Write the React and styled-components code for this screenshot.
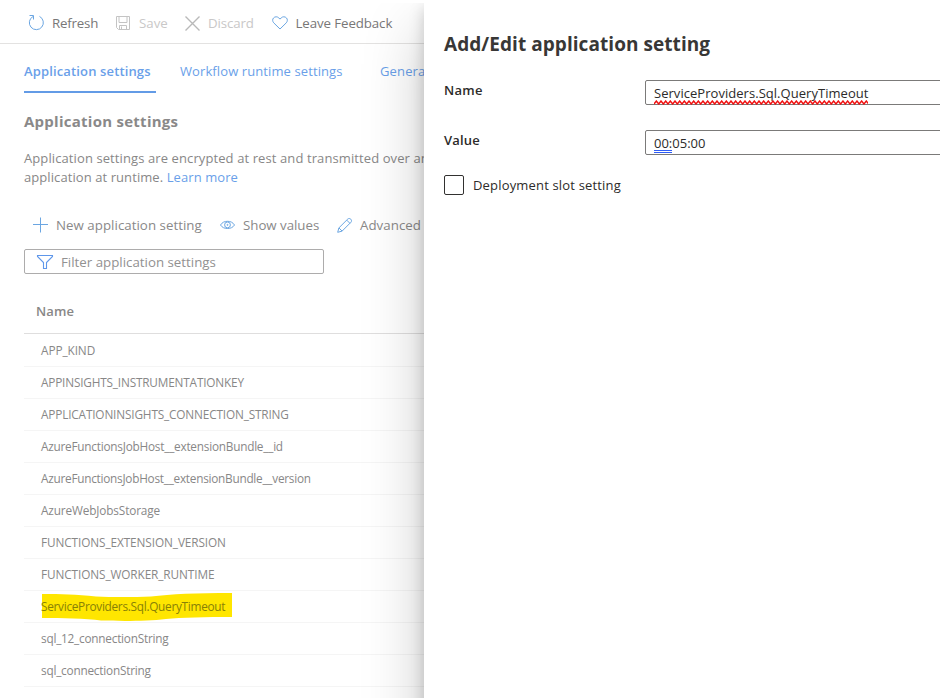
import React from "react";
import styled, { createGlobalStyle } from "styled-components";

const GlobalStyle = createGlobalStyle`
  *, *::before, *::after { box-sizing: border-box; }
  body {
    margin: 0;
    background: #fff;
    font-family: "Open Sans", "Noto Sans", sans-serif;
    overflow: hidden;
  }
`;

const Page = styled.div`
  width: 940px;
  height: 698px;
  padding-top: 3px;
  overflow: hidden;
`;

const Stage = styled.div`
  display: flex;
  height: 695px;
  overflow: hidden;
`;

const Blade = styled.main`
  flex: none;
  width: 424px;
  overflow: hidden;
  color: #888787;
  white-space: nowrap;
`;

const Label = styled.span`
  letter-spacing: ${(p) => p.$spacing || 0}px;
`;

const CommandBar = styled.div`
  display: flex;
  align-items: center;
  height: 41px;
  padding-left: 28px;
  border-bottom: 1px solid #e3e2e1;
`;

const Command = styled.div`
  display: flex;
  align-items: center;
  flex: none;
  width: ${(p) => p.$width}px;
  gap: ${(p) => p.$gap}px;
  font-size: 13.3px;
  line-height: 18px;
  color: ${(p) => (p.$disabled ? "#c9c8c8" : "#787777")};
`;

const Icon = styled.svg`
  display: block;
  flex: none;
  overflow: visible;
  fill: none;
  stroke: ${(p) => p.$color || "#6ba6e2"};
  stroke-width: ${(p) => p.$weight || 1};
`;

const Tabs = styled.nav`
  display: flex;
  gap: 24px;
  padding-left: 24px;
  height: 49px;
`;

const Tab = styled.div`
  flex: none;
  height: 49px;
  width: ${(p) => p.$width}px;
  padding-top: 18px;
  font-size: 13px;
  line-height: 18px;
  font-weight: ${(p) => (p.$active ? 600 : 400)};
  color: #6a9fe9;
  border-bottom: 2px solid ${(p) => (p.$active ? "#639be6" : "transparent")};
`;

const Heading = styled.h2`
  margin: 17px 0 0 24px;
  font-size: 15px;
  line-height: 22px;
  font-weight: 700;
  color: #8a8989;
`;

const Description = styled.p`
  margin: 17px 0 0 24px;
  font-size: 13px;
  line-height: 19px;
`;

const Link = styled.a`
  color: #6a9fe9;
`;

const GridActions = styled.div`
  display: flex;
  align-items: center;
  height: 20px;
  margin-top: 28px;
  padding-left: 32px;
`;

const Action = styled(Command)`
  color: #8a8989;
`;

const FilterBox = styled.div`
  display: flex;
  align-items: center;
  gap: 8px;
  width: 300px;
  height: 25px;
  margin: 14px 0 0 24px;
  padding: 1px 0 0 12px;
  border: 1px solid #adacac;
  border-radius: 2px;
  font-size: 13.3px;
  line-height: 18px;
  color: #929191;
`;

const Table = styled.div`
  margin: 19px 0 0 24px;
`;

const TableHeader = styled.div`
  height: 41px;
  padding: 9px 0 0 12px;
  border-bottom: 1px solid #dfdede;
  font-size: 13px;
  line-height: 18px;
  font-weight: 600;
`;

const TableRow = styled.div`
  display: flex;
  align-items: center;
  height: ${(p) => (p.$first ? 33 : 32)}px;
  padding: 0 0 ${(p) => (p.$first ? 0 : 1)}px 17px;
  border-bottom: 1px solid #f5f5f5;
  font-size: 11.8px;
  line-height: 18px;
`;

const Marked = styled.div`
  position: relative;
  color: ${(p) => (p.$on ? "#878007" : "inherit")};
`;

const Marker = styled.svg`
  position: absolute;
  left: 0;
  top: -5px;
  width: 192px;
  height: 30px;
`;

const MarkedText = styled(Label)`
  position: relative;
`;

const Panel = styled.aside`
  position: relative;
  z-index: 1;
  flex: none;
  width: 700px;
  height: 900px;
  padding: 28px 0 0 20px;
  background: #fff;
  color: #2c2b2a;
  box-shadow: 0 25.6px 57.6px rgba(0, 0, 0, 0.22), 0 4.8px 14.4px rgba(0, 0, 0, 0.18);
`;

const PanelTitle = styled.h1`
  margin: 0 0 19px;
  font-size: 19px;
  line-height: 26px;
  font-weight: 700;
  color: #383736;
`;

const Field = styled.div`
  display: flex;
  height: 50px;
`;

const FieldName = styled.div`
  flex: none;
  width: 201px;
  padding-top: 5px;
  font-size: 13px;
  line-height: 18px;
  font-weight: 600;
`;

const TextBox = styled.div`
  flex: 1;
  height: 25px;
  margin-top: 4px;
  padding: 3px 0 0 8px;
  border: 1px solid #7b7a79;
  border-radius: 2px;
  font-size: 13px;
  line-height: 18px;
`;

const Proofed = styled.span`
  position: relative;
`;

const Squiggle = styled.svg`
  position: absolute;
  left: 0;
  top: 15.5px;
  width: 214px;
  height: 5px;
  fill: none;
  stroke: #f01010;
  stroke-width: 1.4;
`;

const DoubleLine = styled.i`
  position: absolute;
  left: 0;
  top: 16px;
  width: 18px;
  height: 3px;
  border: solid #2f5cf5;
  border-width: 1px 0;
`;

const CheckRow = styled.label`
  display: flex;
  align-items: center;
  gap: 9px;
  height: 20px;
  margin-top: -1px;
  font-size: 13px;
  line-height: 18px;
`;

const CheckBox = styled.span`
  width: 20px;
  height: 20px;
  border: 1px solid #323130;
  border-radius: 2px;
`;

const RefreshIcon = () => (
  <Icon width="16" height="16">
    <path d="M11.500 1.4A7 7 0 1 1 5 1.500M1.500.500h4v4" />
  </Icon>
);
const SaveIcon = () => (
  <Icon width="14" height="14" $color="#c4c4c4">
    <path d="M1 .5h12.5v13H2.5L.5 11.500V.5H1M3 .5v6h8v-6M3.500 13.500v-4h7v4M5.500 10.500v3" />
  </Icon>
);
const CloseIcon = () => (
  <Icon width="15" height="15" $color="#b9b9b9" $weight="1.4">
    <path d="M.5.500l14 14M14.500.500l-14 14" />
  </Icon>
);
const HeartIcon = () => (
  <Icon width="16" height="14">
    <path d="M8 13 1.700 6.800C.4 5.300.3 3.300 1.500 2 2.900.400 5.400.400 6.800 1.900L8 3.100l1.200-1.200c1.400-1.500 3.900-1.500 5.300.1 1.200 1.300 1.100 3.300-.2 4.800z" />
  </Icon>
);
const PlusIcon = () => (
  <Icon width="16" height="16">
    <path d="M8.500.500v15M1 7.500h15" />
  </Icon>
);
const EyeIcon = () => (
  <Icon width="15" height="10">
    <path d="M.5 5C2.200 2.300 4.600 1.300 7.500 1.300s5.300 1 7 3.700c-1.700 2.600-4.100 3.500-7 3.500S2.200 7.600.5 5z" />
    <circle cx="7.500" cy="4.900" r="2.900" />
    <circle cx="7.500" cy="4.900" r=".5" />
  </Icon>
);
const PencilIcon = () => (
  <Icon width="15" height="15">
    <path d="M.7 14.300 1.900 9.900 10.800 1C11.600.300 12.900.300 13.800 1.200s.9 2.200.2 3L5.100 13.100zM1.900 9.900l3.200 3.200M9.700 2.100l3.200 3.200" />
  </Icon>
);
const FunnelIcon = () => (
  <Icon width="16" height="14" $color="#5f97ea" $weight="1.100">
    <path d="M.5.500h15v1L9.500 7.500v6h-3v-6L.5 1.500z" />
  </Icon>
);

const settings = [
  ["APP_KIND", -0.08],
  ["APPINSIGHTS_INSTRUMENTATIONKEY", -0.18],
  ["APPLICATIONINSIGHTS_CONNECTION_STRING", -0.158],
  ["AzureFunctionsJobHost__extensionBundle__id", -0.234],
  ["AzureFunctionsJobHost__extensionBundle__version", -0.256],
  ["AzureWebJobsStorage", -0.14],
  ["FUNCTIONS_EXTENSION_VERSION", -0.095],
  ["FUNCTIONS_WORKER_RUNTIME", -0.1],
  ["ServiceProviders.Sql.QueryTimeout", -0.28],
  ["sql_12_connectionString", -0.23],
  ["sql_connectionString", -0.22],
];

const highlighted = "ServiceProviders.Sql.QueryTimeout";

const squiggle = Array.from({ length: 93 }, (_, i) => `${i ? "L" : "M"}${i * 2.333} ${i % 2 ? 1 : 4}`).join("");

export default function App() {
  return (
    <Page>
      <GlobalStyle />
      <Stage>
        <Blade>
          <CommandBar>
            <Command $width={88} $gap={8}>
              <RefreshIcon />
              <Label $spacing={-0.2}>Refresh</Label>
            </Command>
            <Command $width={69} $gap={9} $disabled>
              <SaveIcon />
              <Label $spacing={0}>Save</Label>
            </Command>
            <Command $width={87} $gap={8} $disabled>
              <CloseIcon />
              <Label $spacing={-0.12}>Discard</Label>
            </Command>
            <Command $width={130} $gap={7.5}>
              <HeartIcon />
              <Label $spacing={-0.1}>Leave Feedback</Label>
            </Command>
          </CommandBar>
          <Tabs>
            <Tab $width={132} $active>
              <Label $spacing={0.14}>Application settings</Label>
            </Tab>
            <Tab $width={176}>
              <Label $spacing={0.1}>Workflow runtime settings</Label>
            </Tab>
            <Tab $width={130}>
              <Label $spacing={0.15}>General</Label>
            </Tab>
          </Tabs>
          <Heading>
            <Label $spacing={0.26}>Application settings</Label>
          </Heading>
          <Description>
            <Label $spacing={0.1}>
              Application settings are encrypted at rest and transmitted over an
            </Label>
            <br />
            <Label $spacing={0.08}>
              application at runtime. <Link>Learn more</Link>
            </Label>
          </Description>
          <GridActions>
            <Action $width={188} $gap={8}>
              <PlusIcon />
              <Label $spacing={0.03}>New application setting</Label>
            </Action>
            <Action $width={117} $gap={8}>
              <EyeIcon />
              <Label $spacing={-0.03}>Show values</Label>
            </Action>
            <Action $width={120} $gap={8}>
              <PencilIcon />
              <Label $spacing={0.03}>Advanced</Label>
            </Action>
          </GridActions>
          <FilterBox>
            <FunnelIcon />
            <Label>Filter application settings</Label>
          </FilterBox>
          <Table>
            <TableHeader>
              <Label $spacing={0.15}>Name</Label>
            </TableHeader>
            {settings.map(([name, spacing], i) => (
              <TableRow key={name} $first={i === 0}>
                <Marked $on={name === highlighted}>
                  {name === highlighted && (
                    <Marker viewBox="0 0 192 30">
                      <path
                        fill="#ffe600"
                        d="M1 2C20 2 35 2.500 55 4.500C75 5.500 95 5 110 4.500C130 2 155 1 191 1V25C165 25 140 25.500 125 27C105 29.500 75 29 60 28.500C45 26 20 26.500 1 26z"
                      />
                    </Marker>
                  )}
                  <MarkedText $spacing={spacing}>{name}</MarkedText>
                </Marked>
              </TableRow>
            ))}
          </Table>
        </Blade>
        <Panel>
          <PanelTitle>
            <Label $spacing={0.06}>Add/Edit application setting</Label>
          </PanelTitle>
          <Field>
            <FieldName>
              <Label $spacing={0.3}>Name</Label>
            </FieldName>
            <TextBox>
              <Proofed>
                <Label $spacing={0.04}>ServiceProviders.Sql.QueryTimeout</Label>
                <Squiggle viewBox="0 0 214 5">
                  <path d={squiggle} />
                </Squiggle>
              </Proofed>
            </TextBox>
          </Field>
          <Field>
            <FieldName>
              <Label $spacing={0.2}>Value</Label>
            </FieldName>
            <TextBox>
              <Proofed>
                <Label $spacing={0}>00:05:00</Label>
                <DoubleLine />
              </Proofed>
            </TextBox>
          </Field>
          <CheckRow>
            <CheckBox />
            <Label $spacing={0.17}>Deployment slot setting</Label>
          </CheckRow>
        </Panel>
      </Stage>
    </Page>
  );
}
